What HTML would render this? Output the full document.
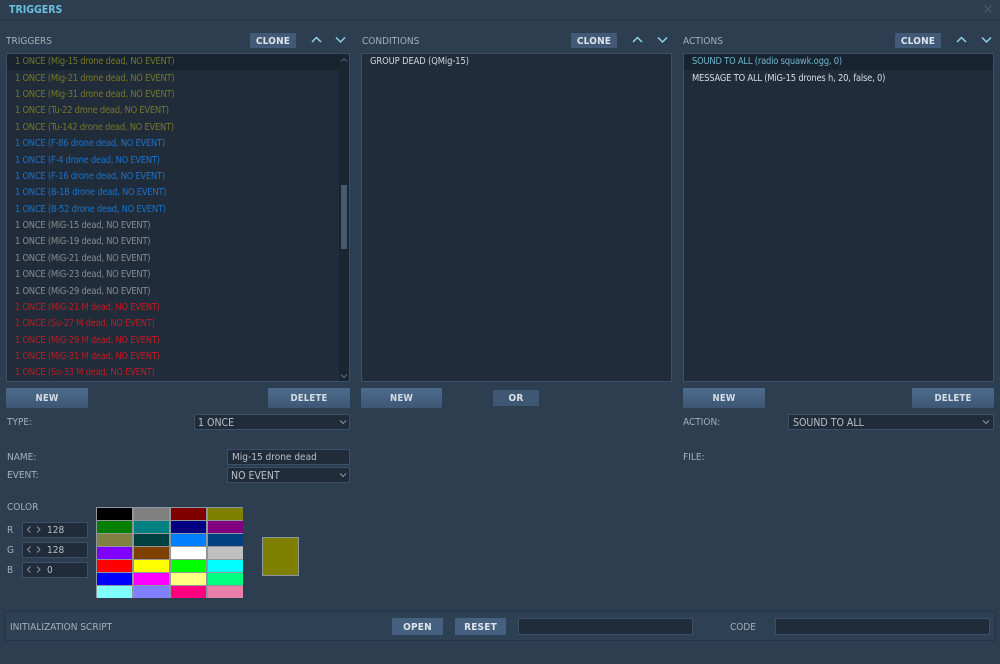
<!DOCTYPE html>
<html><head><meta charset="utf-8"><style>
html,body{margin:0;padding:0}
body{width:1000px;height:664px;overflow:hidden;position:relative;background:#2d3e51;font-family:"DejaVu Sans Condensed","DejaVu Sans",sans-serif;font-stretch:condensed;font-size:10px;color:#a5afb8}
#r div,#r svg{position:absolute}
.t{white-space:nowrap;line-height:12px;margin-top:1px}
.l{background:#202c3a;border:1px solid #3b5066;box-sizing:border-box}
.cl{background:#425a78;color:#dde4ea;font-weight:bold;text-align:center;font-size:10px;line-height:17px;height:15px;letter-spacing:.2px}
.b{background:linear-gradient(#4d6c8e,#3e5773);color:#d5dde5;font-weight:bold;text-align:center;font-size:9.5px;line-height:21px;height:20px;border-radius:1px;letter-spacing:.2px}
.in{background:#202c3a;border:1px solid #3b5066;box-sizing:border-box;color:#b8c0c8;line-height:16px;padding-left:3px;white-space:nowrap;font-size:10.5px}
.n{font-size:10px}
.row,.s{white-space:nowrap;line-height:12px;font-size:9.3px;letter-spacing:-.25px;margin-top:1px}
.row{left:15px}
.y{color:#76762a}.u{color:#1a72c8}.g{color:#868b90}.e{color:#c01a24}
</style></head><body><div id="r">
<div style="left:0;top:20px;width:1000px;height:1px;background:#26364a"></div>
<div class="t" style="left:9px;top:3px;color:#6cc0dd;font-weight:bold;font-size:10.5px">TRIGGERS</div>
<svg style="left:983px;top:4px" width="10" height="10"><path d="M1.5 1.5L8.5 8.5M8.5 1.5L1.5 8.5" stroke="#4c5e70" stroke-width="1"/></svg>

<div class="t" style="left:6px;top:35px">TRIGGERS</div>
<div class="cl" style="left:250px;top:33px;width:46px">CLONE</div>
<svg style="left:311px;top:36px" width="11" height="8"><path d="M1 6L5.5 1.5L10 6" fill="none" stroke="#8fd4ea" stroke-width="1.5"/></svg>
<svg style="left:335px;top:36px" width="11" height="8"><path d="M1 1.5L5.5 6L10 1.5" fill="none" stroke="#8fd4ea" stroke-width="1.5"/></svg>

<div class="t" style="left:362px;top:35px">CONDITIONS</div>
<div class="cl" style="left:571px;top:33px;width:46px">CLONE</div>
<svg style="left:632px;top:36px" width="11" height="8"><path d="M1 6L5.5 1.5L10 6" fill="none" stroke="#8fd4ea" stroke-width="1.5"/></svg>
<svg style="left:657px;top:36px" width="11" height="8"><path d="M1 1.5L5.5 6L10 1.5" fill="none" stroke="#8fd4ea" stroke-width="1.5"/></svg>

<div class="t" style="left:683px;top:35px">ACTIONS</div>
<div class="cl" style="left:895px;top:33px;width:46px">CLONE</div>
<svg style="left:956px;top:36px" width="11" height="8"><path d="M1 6L5.5 1.5L10 6" fill="none" stroke="#8fd4ea" stroke-width="1.5"/></svg>
<svg style="left:981px;top:36px" width="11" height="8"><path d="M1 1.5L5.5 6L10 1.5" fill="none" stroke="#8fd4ea" stroke-width="1.5"/></svg>

<div class="l" style="left:6px;top:53px;width:344px;height:329px"></div>
<div style="left:7px;top:54px;width:332px;height:16px;background:#182330"></div>
<div style="left:339px;top:54px;width:10px;height:327px;background:#1b2530"></div>
<div style="left:341px;top:185px;width:6px;height:64px;background:#465a6e"></div>
<svg style="left:340px;top:57px" width="8" height="6"><path d="M1 4.5L4 1.5L7 4.5" fill="none" stroke="#4f6072" stroke-width="1"/></svg>
<svg style="left:340px;top:373px" width="8" height="6"><path d="M1 1.5L4 4.5L7 1.5" fill="none" stroke="#5f7082" stroke-width="1"/></svg>

<div class="row y" style="top:55px">1 ONCE (Mig-15 drone dead, NO EVENT)</div>
<div class="row y" style="top:72px">1 ONCE (Mig-21 drone dead, NO EVENT)</div>
<div class="row y" style="top:88px">1 ONCE (Mig-31 drone dead, NO EVENT)</div>
<div class="row y" style="top:104px">1 ONCE (Tu-22 drone dead, NO EVENT)</div>
<div class="row y" style="top:121px">1 ONCE (Tu-142 drone dead, NO EVENT)</div>
<div class="row u" style="top:137px">1 ONCE (F-86 drone dead, NO EVENT)</div>
<div class="row u" style="top:154px">1 ONCE (F-4 drone dead, NO EVENT)</div>
<div class="row u" style="top:170px">1 ONCE (F-16 drone dead, NO EVENT)</div>
<div class="row u" style="top:186px">1 ONCE (B-1B drone dead, NO EVENT)</div>
<div class="row u" style="top:203px">1 ONCE (B-52 drone dead, NO EVENT)</div>
<div class="row g" style="top:219px">1 ONCE (MiG-15 dead, NO EVENT)</div>
<div class="row g" style="top:235px">1 ONCE (MiG-19 dead, NO EVENT)</div>
<div class="row g" style="top:252px">1 ONCE (MiG-21 dead, NO EVENT)</div>
<div class="row g" style="top:268px">1 ONCE (MiG-23 dead, NO EVENT)</div>
<div class="row g" style="top:285px">1 ONCE (MiG-29 dead, NO EVENT)</div>
<div class="row e" style="top:301px">1 ONCE (MiG-21 M dead, NO EVENT)</div>
<div class="row e" style="top:317px">1 ONCE (Su-27 M dead, NO EVENT)</div>
<div class="row e" style="top:334px">1 ONCE (MiG-29 M dead, NO EVENT)</div>
<div class="row e" style="top:350px">1 ONCE (MiG-31 M dead, NO EVENT)</div>
<div class="row e" style="top:366px">1 ONCE (Su-33 M dead, NO EVENT)</div>

<div class="l" style="left:361px;top:53px;width:311px;height:329px"></div>
<div class="s" style="left:370px;top:55px;color:#d0d6dc;letter-spacing:-.1px">GROUP DEAD (QMig-15)</div>

<div class="l" style="left:683px;top:53px;width:311px;height:329px"></div>
<div style="left:684px;top:54px;width:309px;height:16px;background:#182330"></div>
<div class="s" style="left:692px;top:55px;color:#6fb4cc;letter-spacing:-.2px">SOUND TO ALL (radio squawk.ogg, 0)</div>
<div class="s" style="left:692px;top:72px;color:#d8dde2;letter-spacing:-.2px">MESSAGE TO ALL (MiG-15 drones h, 20, false, 0)</div>

<div class="b" style="left:6px;top:388px;width:82px">NEW</div>
<div class="b" style="left:268px;top:388px;width:82px">DELETE</div>
<div class="b" style="left:361px;top:388px;width:81px">NEW</div>
<div class="cl" style="left:493px;top:390px;width:46px;height:16px;line-height:17px;background:#3f5773">OR</div>
<div class="b" style="left:683px;top:388px;width:82px">NEW</div>
<div class="b" style="left:912px;top:388px;width:82px">DELETE</div>

<div class="t" style="left:7px;top:416px">TYPE:</div>
<div class="in" style="left:194px;top:414px;width:156px;height:16px">1 ONCE</div>
<svg style="left:339px;top:419px" width="8" height="6"><path d="M1 1.5L4 4.5L7 1.5" fill="none" stroke="#8a98a6" stroke-width="1"/></svg>

<div class="t" style="left:7px;top:451px">NAME:</div>
<div class="in n" style="left:227px;top:449px;width:123px;height:16px;padding-left:4px">Mig-15 drone dead</div>
<div class="t" style="left:7px;top:469px">EVENT:</div>
<div class="in" style="left:227px;top:467px;width:123px;height:16px">NO EVENT</div>
<svg style="left:339px;top:472px" width="8" height="6"><path d="M1 1.5L4 4.5L7 1.5" fill="none" stroke="#8a98a6" stroke-width="1"/></svg>

<div class="t" style="left:683px;top:416px">ACTION:</div>
<div class="in" style="left:788px;top:414px;width:206px;height:16px;padding-left:4px">SOUND TO ALL</div>
<svg style="left:982px;top:419px" width="8" height="6"><path d="M1 1.5L4 4.5L7 1.5" fill="none" stroke="#8a98a6" stroke-width="1"/></svg>
<div class="t" style="left:683px;top:451px">FILE:</div>

<div class="t" style="left:7px;top:501px">COLOR</div>
<div class="t" style="left:7px;top:524px">R</div>
<div class="t" style="left:7px;top:544px">G</div>
<div class="t" style="left:7px;top:564px">B</div>
<div class="in n" style="left:22px;top:522px;width:66px;height:16px;padding-left:24px">128</div>
<div class="in n" style="left:22px;top:542px;width:66px;height:16px;padding-left:24px">128</div>
<div class="in n" style="left:22px;top:562px;width:66px;height:16px;padding-left:24px">0</div>
<svg style="left:26px;top:525px" width="16" height="50"><path d="M4.5 1.5L1.5 4.5L4.5 7.5M11 1.5L14 4.5L11 7.5M4.5 21.5L1.5 24.5L4.5 27.5M11 21.5L14 24.5L11 27.5M4.5 41.5L1.5 44.5L4.5 47.5M11 41.5L14 44.5L11 47.5" fill="none" stroke="#8a98a6" stroke-width=".9"/></svg>

<svg style="left:96px;top:507px" width="147" height="91">
<rect width="147" height="91" fill="#8f969c"/>
<g>
<rect x="1" y="1" width="35" height="12" fill="#000"/><rect x="38" y="1" width="35" height="12" fill="#808080"/><rect x="75" y="1" width="35" height="12" fill="#800000"/><rect x="112" y="1" width="35" height="12" fill="#808000"/>
<rect x="1" y="14" width="35" height="12" fill="#008000"/><rect x="38" y="14" width="35" height="12" fill="#008080"/><rect x="75" y="14" width="35" height="12" fill="#000080"/><rect x="112" y="14" width="35" height="12" fill="#800080"/>
<rect x="1" y="27" width="35" height="12" fill="#808040"/><rect x="38" y="27" width="35" height="12" fill="#004040"/><rect x="75" y="27" width="35" height="12" fill="#0080ff"/><rect x="112" y="27" width="35" height="12" fill="#004080"/>
<rect x="1" y="40" width="35" height="12" fill="#8000ff"/><rect x="38" y="40" width="35" height="12" fill="#804000"/><rect x="75" y="40" width="35" height="12" fill="#fff"/><rect x="112" y="40" width="35" height="12" fill="#c0c0c0"/>
<rect x="1" y="53" width="35" height="12" fill="#f00"/><rect x="38" y="53" width="35" height="12" fill="#ff0"/><rect x="75" y="53" width="35" height="12" fill="#0f0"/><rect x="112" y="53" width="35" height="12" fill="#0ff"/>
<rect x="1" y="66" width="35" height="12" fill="#00f"/><rect x="38" y="66" width="35" height="12" fill="#f0f"/><rect x="75" y="66" width="35" height="12" fill="#ffff80"/><rect x="112" y="66" width="35" height="12" fill="#00ff80"/>
<rect x="1" y="79" width="35" height="12" fill="#80ffff"/><rect x="38" y="79" width="35" height="12" fill="#8080ff"/><rect x="75" y="79" width="35" height="12" fill="#ff0080"/><rect x="112" y="79" width="35" height="12" fill="#e87fa8"/>
</g></svg>
<div style="left:262px;top:537px;width:37px;height:39px;background:#808000;border:1px solid #8f969c;box-sizing:border-box"></div>

<div style="left:4px;top:611px;width:992px;height:30px;border:1px solid #24344a;box-sizing:border-box;background:#2e4053"></div>
<div class="t" style="left:10px;top:621px">INITIALIZATION SCRIPT</div>
<div class="cl" style="left:392px;top:618px;width:51px;height:17px;line-height:19px;background:#46607f">OPEN</div>
<div class="cl" style="left:455px;top:618px;width:51px;height:17px;line-height:19px;background:#46607f">RESET</div>
<div class="in" style="left:518px;top:618px;width:175px;height:17px"></div>
<div class="t" style="left:730px;top:621px">CODE</div>
<div class="in" style="left:775px;top:618px;width:215px;height:17px"></div>
</div></body></html>
